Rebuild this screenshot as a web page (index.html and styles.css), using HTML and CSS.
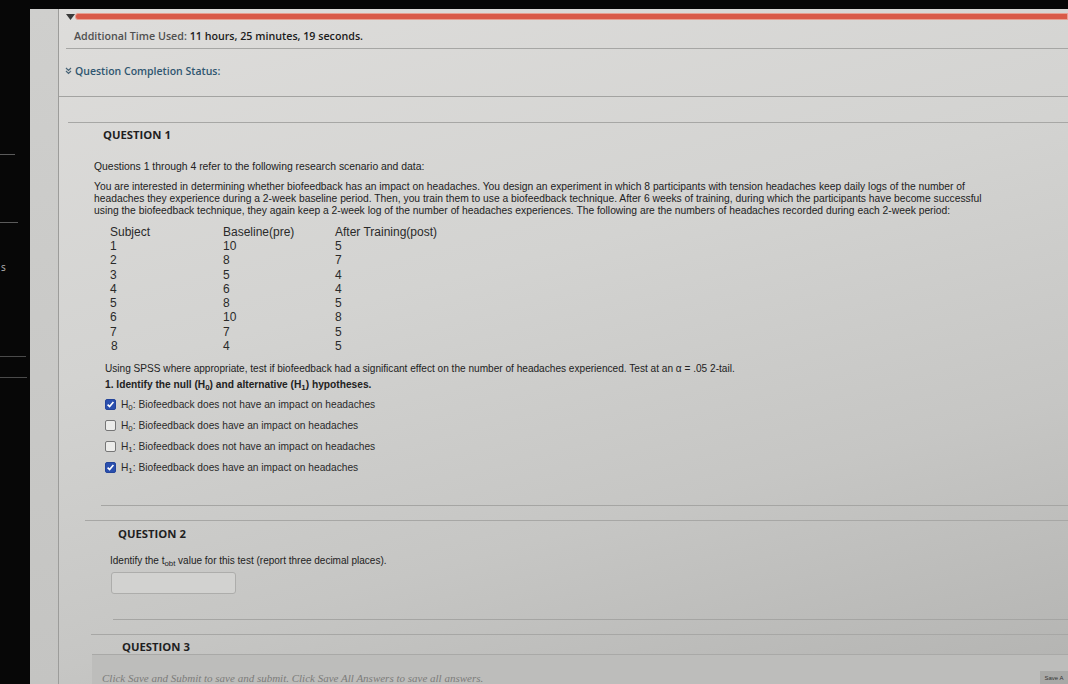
FILE: index.html
```html
<!DOCTYPE html>
<html lang="en">
<head>
<meta charset="utf-8">
<title>Test</title>
<link rel="stylesheet" href="styles.css">
</head>
<body>
<div class="app">
  <aside class="side">
    <span class="tick tick-a"></span>
    <span class="tick tick-b"></span>
    <span class="side-letter">s</span>
    <span class="tick tick-c"></span>
    <span class="tick tick-d"></span>
  </aside>
  <main class="main">
    <div class="gutter"></div>
    <div class="content">
      <div class="progress">
        <svg class="caret" width="9" height="6" viewBox="0 0 9 6"><path d="M0 0h9L4.5 6z" fill="#3a3a3a"/></svg>
        <div class="bar"></div>
      </div>
      <div class="time"><span class="lbl">Additional Time Used:</span> <b>11 hours, 25 minutes, 19 seconds.</b></div>
      <div class="status">
        <svg class="chev" width="7" height="8" viewBox="0 0 7 8"><path d="M1 1l2.5 2.5L6 1M1 4l2.5 2.5L6 4" fill="none" stroke="#4a6578" stroke-width="1.2"/></svg>
        <span>Question Completion Status:</span>
      </div>

      <section class="q q1">
        <h2 class="qtitle">QUESTION 1</h2>
        <p class="intro">Questions 1 through 4 refer to the following research scenario and data:</p>
        <p class="para">You are interested in determining whether biofeedback has an impact on headaches. You design an experiment in which 8 participants with tension headaches keep daily logs of the number of headaches they experience during a 2-week baseline period. Then, you train them to use a biofeedback technique. After 6 weeks of training, during which the participants have become successful using the biofeedback technique, they again keep a 2-week log of the number of headaches experiences. The following are the numbers of headaches recorded during each 2-week period:</p>
        <div class="data">
          <span>Subject</span><span>Baseline(pre)</span><span>After Training(post)</span>
          <span>1</span><span>10</span><span>5</span>
          <span>2</span><span>8</span><span>7</span>
          <span>3</span><span>5</span><span>4</span>
          <span>4</span><span>6</span><span>4</span>
          <span>5</span><span>8</span><span>5</span>
          <span>6</span><span>10</span><span>8</span>
          <span>7</span><span>7</span><span>5</span>
          <span class="last">8</span><span>4</span><span>5</span>
        </div>
        <p class="using">Using SPSS where appropriate, test if biofeedback had a significant effect on the number of headaches experienced. Test at an α = .05 2-tail.</p>
        <p class="ask">1. Identify the null (H<sub>0</sub>) and alternative (H<sub>1</sub>) hypotheses.</p>
        <ul class="opts">
          <li><span class="box on"><svg width="9" height="9" viewBox="0 0 9 9"><path d="M1.6 4.6l2 2L7.4 2" fill="none" stroke="#fff" stroke-width="1.6"/></svg></span><span class="opt-text">H<sub>0</sub>: Biofeedback does not have an impact on headaches</span></li>
          <li><span class="box"></span><span class="opt-text">H<sub>0</sub>: Biofeedback does have an impact on headaches</span></li>
          <li><span class="box"></span><span class="opt-text">H<sub>1</sub>: Biofeedback does not have an impact on headaches</span></li>
          <li><span class="box on"><svg width="9" height="9" viewBox="0 0 9 9"><path d="M1.6 4.6l2 2L7.4 2" fill="none" stroke="#fff" stroke-width="1.6"/></svg></span><span class="opt-text">H<sub>1</sub>: Biofeedback does have an impact on headaches</span></li>
        </ul>
        <div class="endline end1"></div>
      </section>

      <section class="q q2">
        <h2 class="qtitle">QUESTION 2</h2>
        <p class="prompt">Identify the t<sub>obt</sub> value for this test (report three decimal places).</p>
        <div class="answer"></div>
        <div class="endline end2"></div>
      </section>

      <section class="q q3">
        <h2 class="qtitle">QUESTION 3</h2>
      </section>

      <div class="footer">
        <p class="hint">Click Save and Submit to save and submit. Click Save All Answers to save all answers.</p>
        <span class="save">Save A</span>
      </div>
    </div>
  </main>
</div>
</body>
</html>
```

FILE: styles.css
```css
* { box-sizing: border-box; }
html, body { margin: 0; padding: 0; }
body {
  background: #060606;
  width: 1068px;
  height: 684px;
  overflow: hidden;
}
.app {
  display: flex;
  height: 684px;
}
.side {
  width: 30px;
  flex: none;
  background: #070707;
  display: flex;
  flex-direction: column;
  align-items: flex-start;
}
.tick {
  display: block;
  height: 1px;
  background: #5a5a5a;
}
.tick-a { width: 15px; margin-top: 154px; }
.tick-b { width: 18px; margin-top: 67px; }
.side-letter {
  margin-top: 38px;
  margin-left: 1px;
  font: 10px/12px "Open Sans", sans-serif;
  color: #b8b8b8;
}
.tick-c { width: 26px; margin-top: 83px; background: #4a4a4a; }
.tick-d { width: 27px; margin-top: 20px; background: #4a4a4a; }

.main {
  flex: 1;
  margin-top: 9px;
  display: flex;
  background: linear-gradient(165deg, #dedddb 0%, #d3d3d1 40%, #c6c6c4 70%, #b3b3b1 100%);
}
.gutter {
  width: 29px;
  flex: none;
  border-right: 1px solid #9c9c9a;
  background: linear-gradient(180deg, #cfcfcd 0%, #c4c4c2 100%);
}
.content {
  flex: 1;
  display: flex;
  flex-direction: column;
  min-width: 0;
}

.progress {
  height: 18px;
  display: flex;
  align-items: flex-start;
  padding-left: 7px;
}
.caret { margin-top: 5px; flex: none; }
.bar {
  flex: 1;
  margin-top: 4px;
  height: 7px;
  background: #d95a48;
  border: 1px solid #e6a092;
  border-radius: 3px 0 0 3px;
}

.time {
  height: 27px;
  margin-left: 7px;
  padding-left: 8px;
  line-height: 24px;
  border-bottom: 1px solid #a6a6a4;
  font-family: "Open Sans", sans-serif;
  font-size: 10.7px;
  color: #262626;
}
.time .lbl { color: #505050; font-weight: 600; }
.time b { font-weight: 600; color: #1c1c1c; }

.status {
  height: 53px;
  padding-top: 15px;
  padding-left: 6px;
  border-bottom: 1px solid #a3a3a1;
  display: flex;
  align-items: flex-start;
  gap: 3px;
  font-family: "Open Sans", sans-serif;
  font-size: 10.5px;
  font-weight: 600;
  line-height: 14px;
  color: #2f5670;
}
.chev { margin-top: 3px; }

.q {
  border-top: 1px solid #a7a7a5;
}
.qtitle {
  margin: 0;
  font-family: "Open Sans", sans-serif;
  font-size: 11.3px;
  font-weight: 700;
  line-height: 14px;
  color: #1f1f1f;
}
p { margin: 0; }
sub { font-size: 0.78em; vertical-align: -2px; line-height: 0; }

.q1 {
  margin-top: 25px;
  margin-left: 9px;
}
.q1 .qtitle { padding-top: 5px; margin-left: 35px; }
.intro, .para, .using, .prompt {
  font-family: "Liberation Sans", Arial, sans-serif;
  font-size: 10px;
  line-height: 12px;
  color: #222;
}
.intro { margin-top: 19px; margin-left: 26px; font-size: 10.4px; }
.para { margin-top: 8px; margin-left: 26px; width: 895px; font-size: 10.3px; }

.data {
  margin-top: 8px;
  margin-left: 42px;
  display: grid;
  grid-template-columns: 113px 112px 160px;
  grid-auto-rows: 14.25px;
  font-family: "Liberation Sans", Arial, sans-serif;
  font-size: 12px;
  line-height: 14.25px;
  color: #2a2a2a;
}
.data .last { padding-left: 1px; }
.using { margin-top: 10px; margin-left: 37px; font-size: 10.1px; }
.ask {
  margin-top: 3px;
  margin-left: 37px;
  font-family: "Liberation Sans", Arial, sans-serif;
  font-size: 10.2px;
  font-weight: 700;
  line-height: 14px;
  color: #222;
}
.opts {
  list-style: none;
  margin: 2px 0 0 37px;
  padding: 0;
}
.opts li {
  height: 21px;
  display: flex;
  align-items: center;
  font-family: "Liberation Sans", Arial, sans-serif;
  font-size: 10.2px;
  color: #2a2a2a;
}
.opt-text { line-height: 12px; }
.box {
  width: 11px;
  height: 11px;
  flex: none;
  margin-right: 5px;
  border: 1px solid #767676;
  border-radius: 2px;
  background: #ececea;
  display: flex;
  align-items: center;
  justify-content: center;
}
.box.on {
  background: #2a4fae;
  border-color: #23449a;
}
.endline {
  height: 1px;
  background: #a5a5a3;
}
.end1 { margin-top: 27px; margin-left: 33px; }

.q2 {
  margin-top: 14px;
  margin-left: 26px;
}
.q2 .qtitle { padding-top: 6px; margin-left: 33px; }
.prompt { margin-top: 14px; margin-left: 25px; }
.answer {
  margin-top: 5px;
  margin-left: 26px;
  width: 125px;
  height: 22px;
  border: 1px solid #adadab;
  border-radius: 3px;
  background: #d2d2d0;
}
.end2 { margin-top: 25px; margin-left: 28px; }

.q3 {
  margin-top: 14px;
  margin-left: 32px;
}
.q3 .qtitle { padding-top: 5px; margin-left: 31px; }

.footer {
  flex: 1;
  margin-left: 33px;
  border-top: 1px solid #a9a9a7;
  background: #bdbdbb;
  position: relative;
}
.hint {
  margin-top: 17px;
  margin-left: 10px;
  font-family: "Liberation Serif", "Times New Roman", serif;
  font-style: italic;
  font-size: 11px;
  line-height: 12px;
  color: #7c7c7a;
}
.save {
  position: absolute;
  right: 0;
  top: 16px;
  width: 28px;
  height: 14px;
  background: #a9a9a7;
  font: 6px/14px "Liberation Sans", sans-serif;
  color: #333;
  text-align: center;
  overflow: hidden;
}
```
